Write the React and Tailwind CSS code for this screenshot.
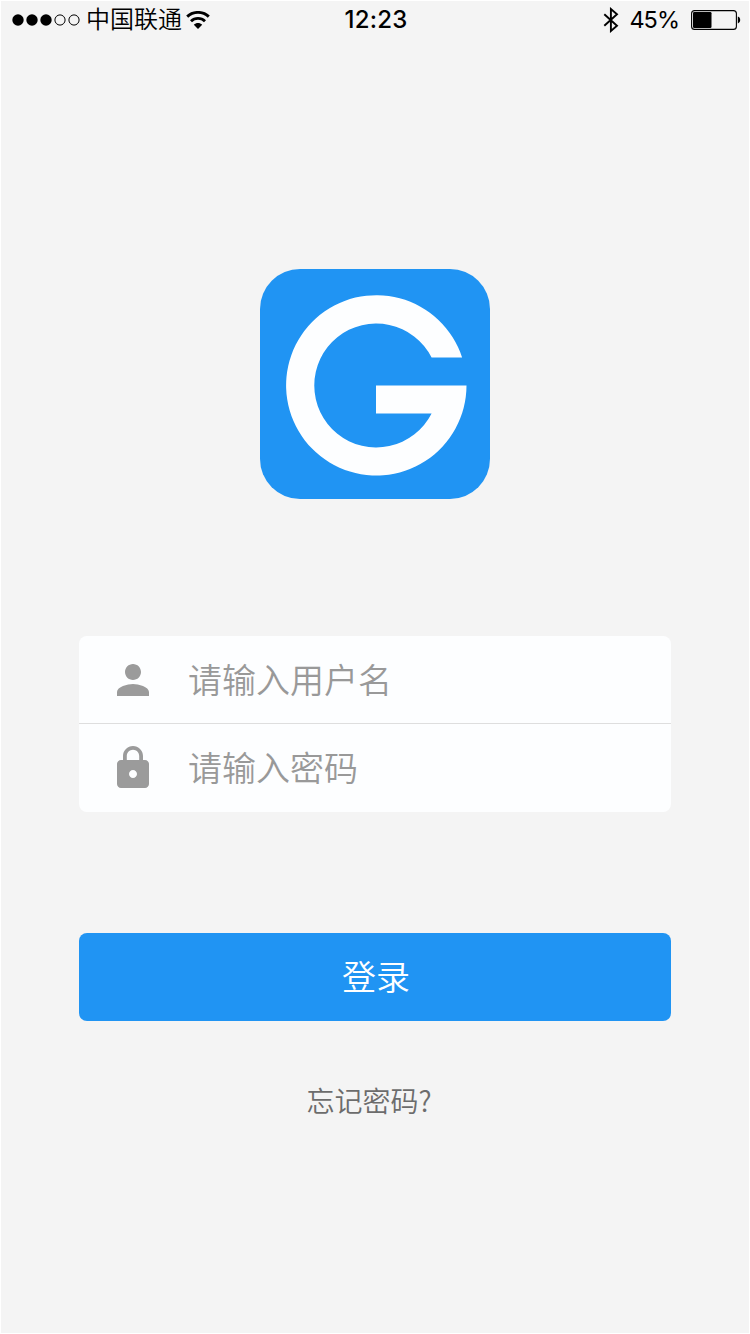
import { useState } from 'react'
import { MdLock, MdPerson } from 'react-icons/md'

function Signal() {
    return (
        <svg className="w-[68px] h-3 shrink-0" viewBox="0 0 68 12">
            <circle cx="6" cy="6" r="5.7" />
            <circle cx="20" cy="6" r="5.7" />
            <circle cx="34" cy="6" r="5.7" />
            <circle cx="48" cy="6" r="5.1" fill="none" stroke="#000" />
            <circle cx="62" cy="6" r="5.1" fill="none" stroke="#000" />
        </svg>
    )
}

function Wifi() {
    return (
        <svg className="ml-1 w-6 h-[18px] shrink-0" viewBox="0 0 24 18" fill="none" stroke="#000" strokeWidth="2.9">
            <path d="M1.2 5.6C7.2 0 16.8 0 22.8 5.6" />
            <path d="M5 10.2C9 6.4 15 6.4 19 10.2" />
            <path d="M12 18L7.8 13.8C10.3 11.3 13.7 11.3 16.2 13.8Z" fill="#000" stroke="none" />
        </svg>
    )
}

function Bluetooth() {
    return (
        <svg className="w-4 h-[26px] shrink-0" viewBox="0 0 16 26" fill="none" stroke="#000" strokeWidth="1.9">
            <path d="M1.3 7.2L14 18.8L7.9 24V2L14 7.2L1.3 18.8" />
        </svg>
    )
}

function Battery() {
    return (
        <svg className="w-[50px] h-5 shrink-0" viewBox="0 0 50 20">
            <rect x="0.6" y="0.6" width="44.8" height="18.8" rx="3" fill="none" stroke="#000" strokeWidth="1.1" />
            <rect x="2" y="2" width="18.5" height="16" rx="1.2" />
            <path d="M46.8 6.6C50 7.4 50 12.6 46.8 13.4Z" />
        </svg>
    )
}

function StatusBar() {
    return (
        <header className="grid grid-cols-3 items-center h-[37px] text-black">
            <div className="flex items-center pl-[11px]">
                <Signal />
                <span className="ml-[6px] pb-[3px] text-2xl leading-none font-[350] whitespace-nowrap">中国联通</span>
                <Wifi />
            </div>
            <div className="pl-[2px] text-center text-2xl leading-none font-medium tracking-[0.2px] font-['Inter',sans-serif]">12:23</div>
            <div className="flex items-center justify-end pr-[8px]">
                <Bluetooth />
                <span className="ml-[10px] mr-[12px] text-[23.5px] leading-none tracking-[-1px] font-['Inter',sans-serif]">45%</span>
                <Battery />
            </div>
        </header>
    )
}

function Logo() {
    return (
        <div className="w-[230px] h-[230px] rounded-[40px] bg-[#2094f3]">
            <svg className="w-full h-full" viewBox="0 0 230 230" fill="#fdfeff">
                <path d="M202.1 88.5A90.2 90.2 0 1 0 206.5 116.5H116V144.5H171.6A62 62 0 1 1 171.6 88.5Z" />
            </svg>
        </div>
    )
}

function Field({ icon: Icon, ...props }) {
    return (
        <label className="flex items-center h-[88px] pl-[30px]">
            <Icon className="w-12 h-12 shrink-0 text-[#9b9b9b]" />
            <input
                className="ml-[31px] pb-[2px] flex-1 min-w-0 bg-transparent outline-none text-[34px] leading-[50px] font-[350] text-[#555] placeholder:text-[#999] placeholder:opacity-100"
                {...props}
            />
        </label>
    )
}

export default function App() {
    const [username, setUsername] = useState('')
    const [password, setPassword] = useState('')

    return (
        <div className="w-[750px] h-[1334px] border border-white bg-[#f4f4f4] font-['Noto_Sans_CJK_SC',sans-serif]">
            <StatusBar />

            <main className="flex flex-col items-center pt-[231px]">
                <Logo />

                <form className="w-[592px] mt-[137px]" onSubmit={(e) => e.preventDefault()}>
                    <div className="rounded-lg bg-[#fdfeff] divide-y divide-[#dedede]">
                        <Field
                            icon={MdPerson}
                            type="text"
                            value={username}
                            onChange={(e) => setUsername(e.target.value)}
                            placeholder="请输入用户名"
                        />
                        <Field
                            icon={MdLock}
                            type="password"
                            value={password}
                            onChange={(e) => setPassword(e.target.value)}
                            placeholder="请输入密码"
                        />
                    </div>

                    <button
                        type="submit"
                        className="block w-full h-[88px] mt-[121px] pl-[2px] pb-[2px] rounded-lg bg-[#2094f3] text-white text-[34px] leading-none font-[350]"
                    >
                        登录
                    </button>
                </form>

                <a className="mt-[59px] mr-[12px] text-[28px] leading-[40px] font-[350] text-[#6c6c6c]">忘记密码?</a>
            </main>
        </div>
    )
}
